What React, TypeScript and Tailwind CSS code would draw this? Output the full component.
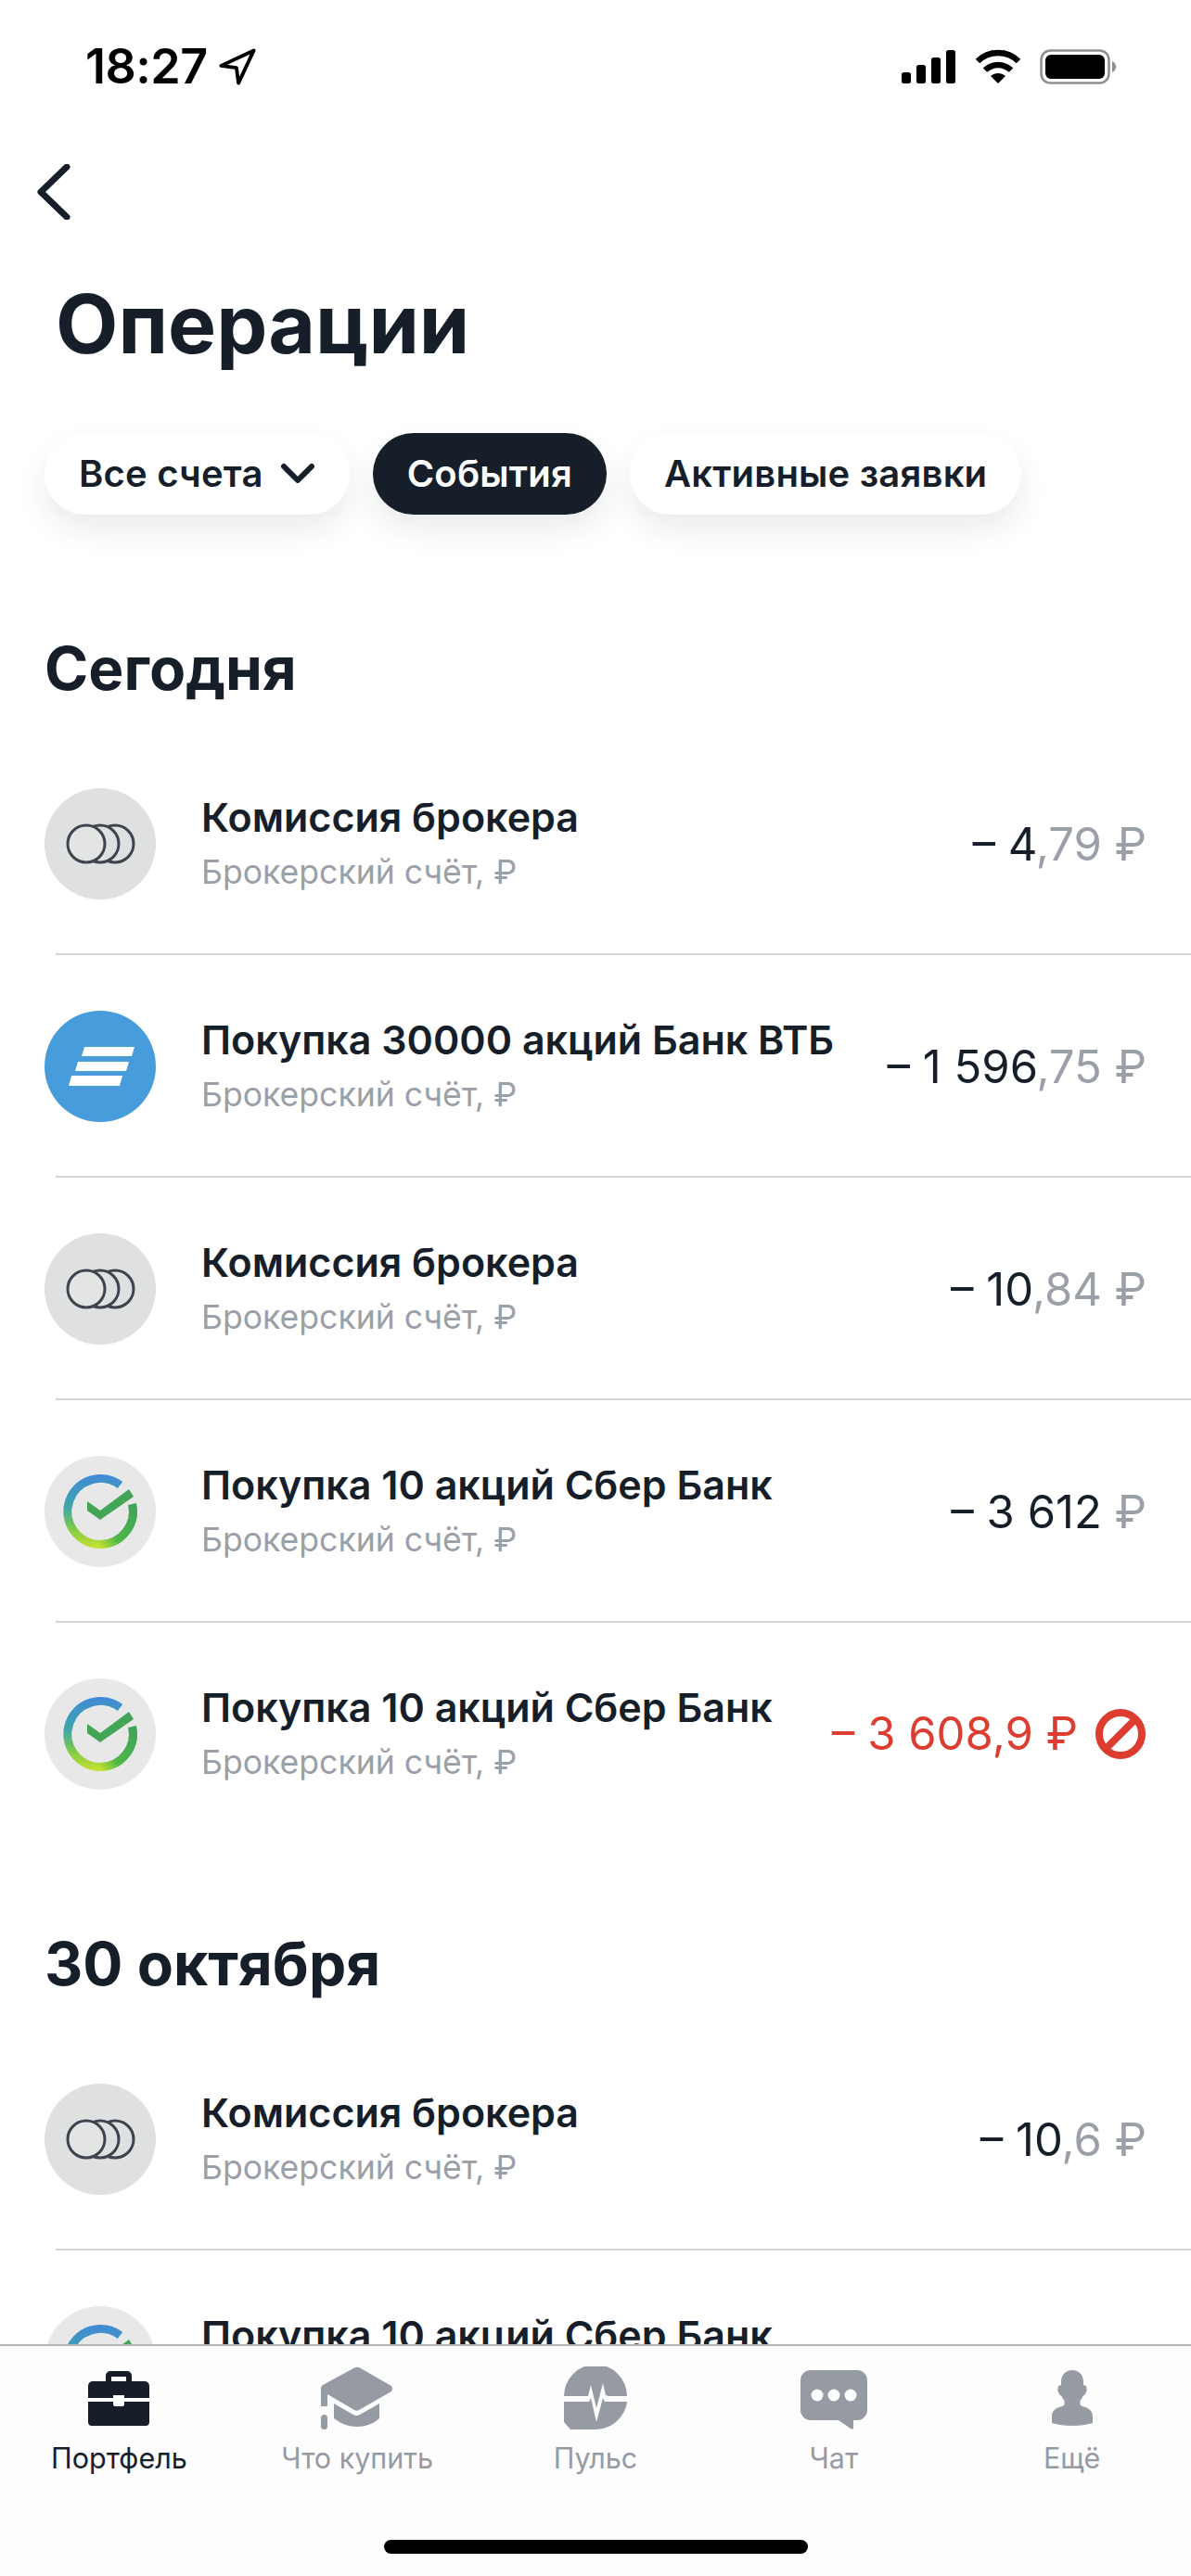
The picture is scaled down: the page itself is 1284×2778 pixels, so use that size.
import React from "react";

const dark = "#161e2a";

function Coins() {
  return (
    <svg width="120" height="120" viewBox="0 0 120 120" fill="#dfe1e1" stroke="#40434e" strokeWidth="3">
      <circle cx="76" cy="60" r="20" />
      <circle cx="60" cy="60" r="20" />
      <circle cx="45" cy="60" r="20" fill="#e3e5e5" />
    </svg>
  );
}

function Vtb() {
  return (
    <svg width="120" height="120" viewBox="0 0 120 120" fill="#ffffff">
      <path d="M43 39h54l-3 10H40z" />
      <path d="M36 55h55l-3 10H33z" />
      <path d="M29 70h55l-3 11H26z" />
    </svg>
  );
}

function Sber({ id }: { id: string }) {
  return (
    <svg width="120" height="120" viewBox="0 0 120 120" fill="none">
      <defs>
        <linearGradient id={`${id}a`} x1="0" y1="20" x2="0" y2="100" gradientUnits="userSpaceOnUse">
          <stop offset="0" stopColor="#4189d6" />
          <stop offset="0.45" stopColor="#3fa6a8" />
          <stop offset="0.72" stopColor="#7cc84a" />
          <stop offset="1" stopColor="#c9e22f" />
        </linearGradient>
        <linearGradient id={`${id}b`} x1="60" y1="100" x2="100" y2="60" gradientUnits="userSpaceOnUse">
          <stop offset="0" stopColor="#c9e22f" />
          <stop offset="0.35" stopColor="#4fb848" />
          <stop offset="1" stopColor="#44a25a" />
        </linearGradient>
      </defs>
      <path d="M81.500 31.500A35.500 35.500 0 1 0 60 95.500" stroke={`url(#${id}a)`} strokeWidth="9" />
      <path d="M60 95.500A35.500 35.500 0 0 0 94.500 52" stroke={`url(#${id}b)`} strokeWidth="9" />
      <path d="M46 49l14 10 31-23 5 8-36 25-14-10z" fill="#45a557" />
    </svg>
  );
}

function Row({ icon, bg, title, whole, frac, last, red }: { icon: React.ReactNode; bg: string; title: string; whole: string; frac?: string; last?: boolean; red?: boolean }) {
  return (
    <div className="relative h-[240px] pl-[48px] pr-[48px] flex items-center">
      <div className={`w-[120px] h-[120px] rounded-full shrink-0 ${bg}`}>{icon}</div>
      <div className="ml-[49px] flex-1 min-w-0">
        <div className="text-[43px] leading-[50px] font-semibold text-[#161e2a] whitespace-nowrap">{title}</div>
        <div className="text-[35.6px] leading-[46px] mt-[12px] text-[#9a9fa8] whitespace-nowrap">Брокерский счёт, ₽</div>
      </div>
      {red ? (
        <div className="flex items-center">
          <span className="text-[49px] text-[#dd3c31] whitespace-nowrap">{whole}</span>
          <svg className="ml-[18px]" width="56" height="56" viewBox="0 0 56 56" fill="none" stroke="#dd3c31" strokeWidth="8">
            <circle cx="28" cy="28" r="23" />
            <path d="M12 44L44 12" />
          </svg>
        </div>
      ) : (
        <span className="text-[49px] whitespace-nowrap text-[#161e2a] pt-[2px]">
          {whole}
          <span className="text-[#9a9fa8]">{frac}</span>
        </span>
      )}
      {!last && <div className="absolute left-[60px] right-0 bottom-0 h-[2px] bg-[#d3d4d7]" />}
    </div>
  );
}

function Pill({ children, active }: { children: React.ReactNode; active?: boolean }) {
  return (
    <div className={`h-[88px] rounded-full px-[37px] flex items-center text-[40px] tracking-[0.2px] font-semibold shadow-[0_16px_32px_rgba(22,30,42,0.09)] ${active ? "bg-[#161e2a] text-white" : "bg-white text-[#161e2a]"}`}>
      {children}
    </div>
  );
}

function Tab({ label, active, children }: { label: string; active?: boolean; children: React.ReactNode }) {
  return (
    <div className="flex flex-col items-center">
      <div className="h-[68px] flex items-center justify-center">{children}</div>
      <div className={`mt-[11px] text-[30.5px] leading-[40px] ${active ? "text-[#161e2a]" : "text-[#969aa3]"}`}>{label}</div>
    </div>
  );
}

export default function App() {
  const g = "#969aa3";
  return (
    <div className="relative w-[1284px] h-[2778px] overflow-hidden bg-white font-['Inter',sans-serif] text-[#161e2a]">
      <div className="h-[144px] pl-[92px] pr-[81px] flex items-center justify-between">
        <div className="flex items-center">
          <span className="text-[52px] font-semibold text-black tracking-[-0.5px]">18:27</span>
          <svg className="ml-[10px]" width="44" height="44" viewBox="0 0 40 40" fill="none" stroke="#000" strokeWidth="3.500" strokeLinejoin="round">
            <path d="M36 4L4 19l15 2 2 15z" />
          </svg>
        </div>
        <div className="flex items-center">
          <svg width="58" height="36" viewBox="0 0 58 36" fill="#000">
            <rect x="0" y="24" width="10" height="12" rx="2.500" />
            <rect x="16" y="16" width="10" height="20" rx="2.500" />
            <rect x="32" y="8" width="10" height="28" rx="2.500" />
            <rect x="48" y="0" width="10" height="36" rx="2.500" />
          </svg>
          <svg className="ml-[21px]" width="50" height="38" viewBox="0 0 50 38" fill="none" stroke="#000" strokeWidth="6.500">
            <path d="M3 13C15 1 35 1 47 13" />
            <path d="M11 22.500c8-7.500 20-7.500 28 0" />
            <path d="M25 37l-8-8c4.500-4 11.500-4 16 0z" fill="#000" stroke="none" />
          </svg>
          <svg className="ml-[20px]" width="82" height="38" viewBox="0 0 82 38" fill="none">
            <rect x="1.500" y="1.500" width="73" height="35" rx="10" stroke="#8f8f8f" strokeWidth="2.500" />
            <rect x="6" y="6" width="64" height="26" rx="6" fill="#000" />
            <path d="M78 13c2.500 1 4 3 4 6s-1.500 5-4 6z" fill="#8f8f8f" />
          </svg>
        </div>
      </div>
      <div className="h-[126px] pl-[40px] flex items-center">
        <svg width="36" height="60" viewBox="0 0 36 60" fill="none" stroke="#161e2a" strokeWidth="7" strokeLinecap="round" strokeLinejoin="round">
          <path d="M32 3L4 30l28 27" />
        </svg>
      </div>
      <h1 className="h-[197px] pl-[60px] text-[87.5px] leading-[158px] font-bold">Операции</h1>
      <div className="pl-[48px] flex gap-[25px]">
        <Pill>
          <span>Все счета</span>
          <svg className="ml-[18px]" width="38" height="24" viewBox="0 0 38 24" fill="none" stroke="#161e2a" strokeWidth="6" strokeLinecap="round" strokeLinejoin="round">
            <path d="M4 4l15 15L34 4" />
          </svg>
        </Pill>
        <Pill active>События</Pill>
        <Pill>Активные заявки</Pill>
      </div>
      <h2 className="pt-[131px] pl-[48px] h-[235px] text-[64px] leading-[70px] font-bold">Сегодня</h2>
      <Row bg="bg-[#dfe1e1]" icon={<Coins />} title="Комиссия брокера" whole="– 4" frac=",79 ₽" />
      <Row bg="bg-[#479cdc]" icon={<Vtb />} title="Покупка 30000 акций Банк ВТБ" whole="– 1 596" frac=",75 ₽" />
      <Row bg="bg-[#dfe1e1]" icon={<Coins />} title="Комиссия брокера" whole="– 10" frac=",84 ₽" />
      <Row bg="bg-[#e8e8e8]" icon={<Sber id="s1" />} title="Покупка 10 акций Сбер Банк" whole="– 3 612" frac=" ₽" />
      <Row bg="bg-[#e8e8e8]" icon={<Sber id="s2" />} title="Покупка 10 акций Сбер Банк" whole="– 3 608,9 ₽" red last />
      <h2 className="pt-[93px] pl-[48px] h-[197px] text-[64px] leading-[70px] font-bold">30 октября</h2>
      <Row bg="bg-[#dfe1e1]" icon={<Coins />} title="Комиссия брокера" whole="– 10" frac=",6 ₽" />
      <Row bg="bg-[#e8e8e8]" icon={<Sber id="s3" />} title="Покупка 10 акций Сбер Банк" whole="– 3 612" frac=" ₽" />

      <div className="absolute left-0 right-0 bottom-0 h-[250px] bg-[#fdfdfd] border-t-2 border-[#b5b6b9]">
        <div className="grid grid-cols-5 pt-[22px]">
          <Tab label="Портфель" active>
            <svg width="68" height="60" viewBox="0 0 68 60" fill={dark}>
              <path d="M20 12V6a5 5 0 0 1 5-5h18a5 5 0 0 1 5 5v6h-6V7H26v5z" />
              <path d="M6 12h56a5 5 0 0 1 5 5v13H40v-3h-12v3H1V17a5 5 0 0 1 5-5z" />
              <path d="M1 34h27v3a2 2 0 0 0 2 2h8a2 2 0 0 0 2-2v-3h27v22a4 4 0 0 1-4 4H5a4 4 0 0 1-4-4z" />
            </svg>
          </Tab>
          <Tab label="Что купить">
            <svg width="80" height="68" viewBox="0 0 80 68" fill={g}>
              <path d="M37 1.500a6 6 0 0 1 6 0l33 19a4 4 0 0 1 0 7L42 47a5 5 0 0 1-5 0L8 30v13H1V24q0-3 2-4z" />
              <path d="M15 40l21 12a7 7 0 0 0 7 0l21-12v16c-7 6-15 9-24 9s-17-3-25-9z" />
              <rect x="1" y="52" width="7" height="16" rx="3.500" />
            </svg>
          </Tab>
          <Tab label="Пульс">
            <svg width="68" height="68" viewBox="0 0 68 68" fill={g}>
              <path d="M0 32A34 34 0 0 1 68 32H48l-3-1-3-13-7 27-6-25-3 12z" />
              <path d="M0 38h27l2-4 6 26 7-26 2 4h24C66 54 52 68 34 68H7l-7-8z" />
            </svg>
          </Tab>
          <Tab label="Чат">
            <svg width="72" height="68" viewBox="0 -4 72 68" fill={g}>
              <path d="M11 0h50a11 11 0 0 1 11 11v32a11 11 0 0 1-11 11h-4v8q0 3-3 1L41 54H11A11 11 0 0 1 0 43V11A11 11 0 0 1 11 0z" />
              <circle cx="18" cy="27" r="6.500" fill="#fdfdfd" />
              <circle cx="36" cy="27" r="6.500" fill="#fdfdfd" />
              <circle cx="54" cy="27" r="6.500" fill="#fdfdfd" />
            </svg>
          </Tab>
          <Tab label="Ещё">
            <svg width="44" height="60" viewBox="0 0 44 60" fill={g}>
              <path d="M22 0c7 0 12 5 12 13v3c3 0 4 3 3.500 6-.5 3-2 5-4 6-1 2-2 4-3 5v4c0 3 13.500 2 13.500 13v7q-10 3-22 3T0 57v-7c0-11 13.500-10 13.500-13v-4c-1-1-2-3-3-5-2-1-3.500-3-4-6-.5-3 .5-6 3.500-6v-3C10 5 15 0 22 0z" />
            </svg>
          </Tab>
        </div>
      </div>
      <div className="absolute left-[414px] top-[2739px] w-[457px] h-[15px] rounded-full bg-black" />
    </div>
  );
}
